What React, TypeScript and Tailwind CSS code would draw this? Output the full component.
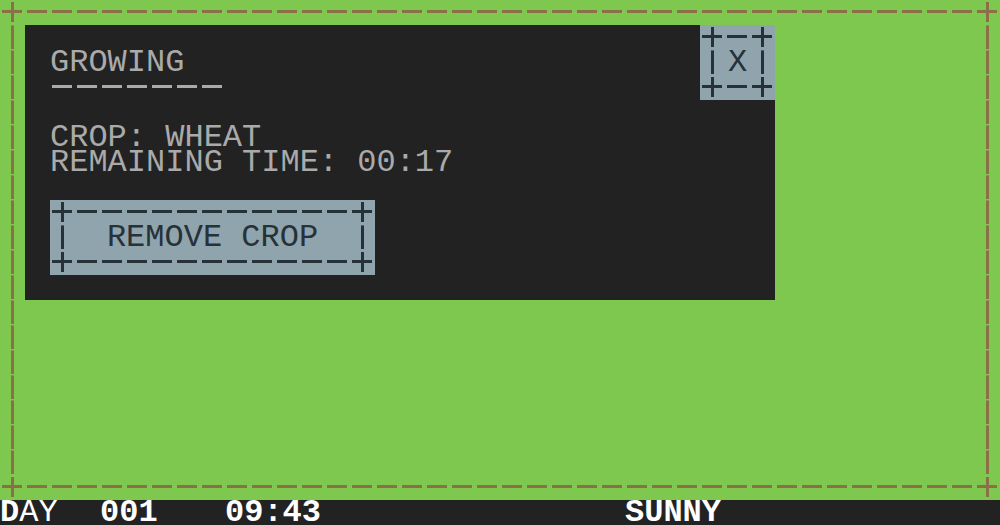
import type { ReactNode } from "react";

function Cross() {
  return (
    <svg aria-hidden="true" viewBox="0 0 25 25" width="25" height="25" shapeRendering="crispEdges" fill="currentColor">
      <rect x="2" y="10" width="20" height="3" />
      <rect x="11" y="2" width="3" height="20" />
    </svg>
  );
}

function Across() {
  return (
    <span
      aria-hidden="true"
      className="block h-[25px] bg-[image:linear-gradient(90deg,transparent_2px,currentColor_2px,currentColor_22px,transparent_22px)] bg-[length:25px_3px] bg-[position:0_10px] bg-repeat-x"
    />
  );
}

function Down() {
  return (
    <span
      aria-hidden="true"
      className="block w-[25px] bg-[image:linear-gradient(color-mix(in_srgb,currentColor_60%,transparent)_1px,currentColor_1px,currentColor_24px,transparent_24px)] bg-[length:3px_25px] bg-[position:11px_0] bg-repeat-y"
    />
  );
}

function Frame({ color, children }: { color: string; children: ReactNode }) {
  return (
    <span className={`grid grow grid-cols-[25px_1fr_25px] grid-rows-[25px_1fr_25px] ${color}`}>
      <Cross />
      <Across />
      <Cross />
      <Down />
      <span className="block">{children}</span>
      <Down />
      <Cross />
      <Across />
      <Cross />
    </span>
  );
}

function FrameButton({ children, className }: { children: ReactNode; className: string }) {
  return (
    <button type="button" className={`flex h-[75px] cursor-pointer bg-[#90a4ae] ${className}`}>
      <Frame color="text-[#263238]">{children}</Frame>
    </button>
  );
}

function Panel() {
  return (
    <section className="w-full max-w-[750px] bg-[#222222] pb-[25px] text-[#aaaaaa]">
      <header className="flex justify-between pl-[25px]">
        <div className="pt-[25px]">
          <h1>GROWING</h1>
          <div className="w-[175px]">
            <Across />
          </div>
        </div>
        <FrameButton className="w-[75px]">X</FrameButton>
      </header>
      <div className="flex flex-col items-start gap-[25px] px-[25px] pt-[25px]">
        <div>
          <p>CROP: WHEAT</p>
          <p>REMAINING TIME: 00:17</p>
        </div>
        <FrameButton className="w-[325px]">REMOVE CROP</FrameButton>
      </div>
    </section>
  );
}

export default function App() {
  return (
    <div className="flex min-h-screen flex-col bg-[#7ec850] font-['Liberation_Mono',monospace] text-[32px] leading-[25px]">
      <main className="flex grow">
        <Frame color="text-[#8b6f47]">
          <Panel />
        </Frame>
      </main>
      <footer className="flex h-[25px] bg-[#222222] text-white">
        <span className="w-[100px]"><b>D</b>AY</span>
        <b className="w-[125px]">001</b>
        <b className="w-[400px]">09:43</b>
        <b>SUNNY</b>
      </footer>
    </div>
  );
}
